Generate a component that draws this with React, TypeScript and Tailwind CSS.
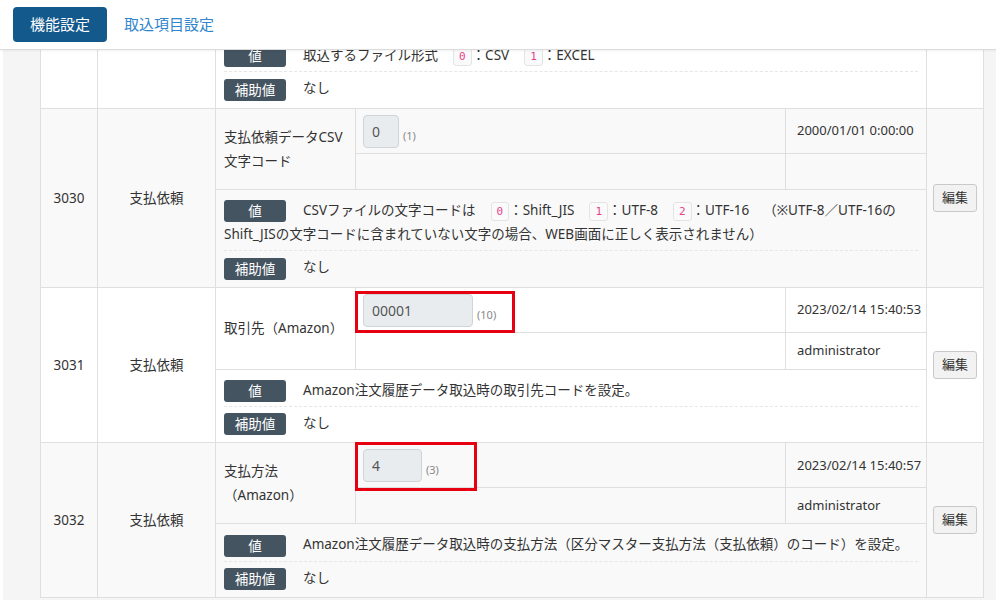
import { useLayoutEffect, useRef, type ReactNode } from "react";

type SettingRow = {
  id: string;
  category: string;
  name: string;
  input: string;
  inputWidth: string;
  hint: string;
  updatedAt: string;
  updatedBy: string;
  value: ReactNode;
  sub: string;
  striped: boolean;
  subRowHeight: string;
  mark?: string;
};

function Badge({ children }: { children: ReactNode }) {
  return (
    <span className="inline-block w-[62px] h-[22px] leading-[22px] mr-[17px] rounded-[3px] bg-[#455461] text-white text-center text-[13.5px] align-middle">
      {children}
    </span>
  );
}

function Code({ children }: { children: ReactNode }) {
  return (
    <code className="inline-block ml-[15px] px-[5px] h-[19px] leading-[17px] rounded-[3px] border border-[#e4e4e4] bg-[#fafafa] text-[#e83e8c] text-[11px] font-['DejaVu_Sans_Mono',monospace] align-middle">
      {children}
    </code>
  );
}

const rows: SettingRow[] = [
  {
    id: "3030",
    category: "支払依頼",
    name: "支払依頼データCSV文字コード",
    input: "0",
    inputWidth: "w-[36px]",
    hint: "(1)",
    updatedAt: "2000/01/01 0:00:00",
    updatedBy: "",
    value: (
      <>
        CSVファイルの文字コードは<Code>0</Code>：Shift_JIS<Code>1</Code>：UTF-8<Code>2</Code>：UTF-16
        <span className="ml-[14px]">（※UTF-8／UTF-16の</span>
        Shift_JISの文字コードに含まれていない文字の場合、WEB画面に正しく表示されません）
      </>
    ),
    sub: "なし",
    striped: true,
    subRowHeight: "h-[36px]",
  },
  {
    id: "3031",
    category: "支払依頼",
    name: "取引先（Amazon）",
    input: "00001",
    inputWidth: "w-[110px]",
    hint: "(10)",
    updatedAt: "2023/02/14 15:40:53",
    updatedBy: "administrator",
    value: "Amazon注文履歴データ取込時の取引先コードを設定。",
    sub: "なし",
    striped: false,
    subRowHeight: "h-[37px]",
    mark: "left-[-1px] top-[3px] w-[160px] h-[42px]",
  },
  {
    id: "3032",
    category: "支払依頼",
    name: "支払方法（Amazon）",
    input: "4",
    inputWidth: "w-[59px]",
    hint: "(3)",
    updatedAt: "2023/02/14 15:40:57",
    updatedBy: "administrator",
    value: "Amazon注文履歴データ取込時の支払方法（区分マスター支払方法（支払依頼）のコード）を設定。",
    sub: "なし",
    striped: true,
    subRowHeight: "h-[36px]",
    mark: "left-[-1px] top-[-1px] w-[122px] h-[49px]",
  },
];

const cell = "border border-[#dfdfdf] align-middle";

function ValueCell({ value, sub }: { value: ReactNode; sub: string }) {
  return (
    <td colSpan={3} className={`${cell} px-[8px] pt-[8px] pb-[7px]`}>
      <div className="leading-[24px]">
        <Badge>値</Badge>
        {value}
      </div>
      <div className="my-[4px] border-t border-dashed border-[#e6e6e6]" />
      <div className="leading-[24px]">
        <Badge>補助値</Badge>
        {sub}
      </div>
    </td>
  );
}

function SettingRows({ row }: { row: SettingRow }) {
  const bg = row.striped ? "bg-[#f9f9f9]" : "bg-white";
  return (
    <>
      <tr className={bg}>
        <td rowSpan={3} className={`${cell} text-center`}>{row.id}</td>
        <td rowSpan={3} className={`${cell} text-center`}>{row.category}</td>
        <td rowSpan={2} className={`${cell} px-[8px] leading-[24px]`}>{row.name}</td>
        <td className={`${cell} relative px-[7px] pt-[6px] pb-[5px]`}>
          <div className="flex items-end gap-[4px]">
            <div className={`${row.inputWidth} h-[33px] leading-[31px] px-[8px] rounded-[4px] border border-[#cfd4d9] bg-[#e9ecef] text-[#555] text-[14px]`}>
              {row.input}
            </div>
            <span className="mb-[5px] text-[11px] leading-[14px] text-[#888]">{row.hint}</span>
          </div>
          {row.mark && (
            <span className={`absolute ${row.mark} border-[3px] border-[#e60012] pointer-events-none`} />
          )}
        </td>
        <td className={`${cell} pl-[11px] text-[13px] whitespace-nowrap`}>{row.updatedAt}</td>
        <td rowSpan={3} className={`${cell} text-center`}>
          <button className="w-[44px] h-[28px] rounded-[3px] border border-[#c9c9c9] bg-[#f2f2f2] text-[13px] text-[#333]">
            編集
          </button>
        </td>
      </tr>
      <tr className={bg}>
        <td className={`${cell} ${row.subRowHeight}`} />
        <td className={`${cell} pl-[11px] text-[13px]`}>{row.updatedBy}</td>
      </tr>
      <tr className={bg}>
        <ValueCell value={row.value} sub={row.sub} />
      </tr>
    </>
  );
}

export default function App() {
  const scrollRef = useRef<HTMLDivElement>(null);

  // list is already scrolled a little past the previous entry
  useLayoutEffect(() => {
    if (scrollRef.current) scrollRef.current.scrollTop = 16;
  }, []);

  return (
    <div className="w-[996px] h-[603px] bg-white text-[#333] text-[13.5px] font-['Noto_Sans','Noto_Sans_CJK_JP',sans-serif] overflow-hidden">
      <header className="relative z-10 h-[50px] flex items-center gap-[17px] px-[13px] bg-white border-b border-[#dcdcdc] shadow-[0_1px_2px_rgba(0,0,0,0.06)]">
        <button className="w-[94px] h-[35px] rounded-[4px] bg-[#13598b] text-white text-[15px]">
          機能設定
        </button>
        <a className="text-[15px] text-[#2f86cc]">取込項目設定</a>
      </header>

      <div ref={scrollRef} className="ml-[3px] h-[550px] overflow-hidden bg-[#f5f5f5]">
        <div className="pl-[37px] pr-[13px] pb-[3px]">
          <table className="w-[943px] table-fixed border-collapse bg-white">
            <colgroup>
              <col className="w-[57px]" />
              <col className="w-[118px]" />
              <col className="w-[140px]" />
              <col className="w-[430px]" />
              <col className="w-[141px]" />
              <col className="w-[57px]" />
            </colgroup>
            <tbody>
              <tr className="bg-white">
                <td className={cell} />
                <td className={cell} />
                <ValueCell
                  value={
                    <>
                      取込するファイル形式<Code>0</Code>：CSV<Code>1</Code>：EXCEL
                    </>
                  }
                  sub="なし"
                />
                <td className={cell} />
              </tr>
              {rows.map((row) => (
                <SettingRows key={row.id} row={row} />
              ))}
            </tbody>
          </table>
        </div>
      </div>
    </div>
  );
}
